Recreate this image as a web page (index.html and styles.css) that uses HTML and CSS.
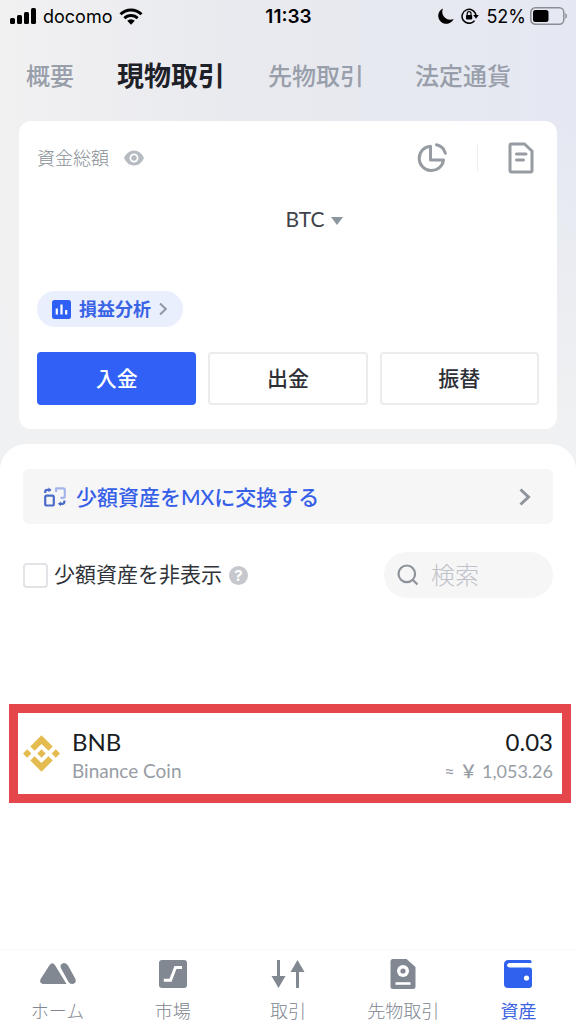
FILE: index.html
```html
<!DOCTYPE html>
<html lang="ja">
<head>
<meta charset="utf-8">
<meta name="viewport" content="width=device-width, initial-scale=1">
<title>現物取引</title>
<link rel="stylesheet" href="styles.css">
</head>
<body>
<div class="screen">
  <header class="status">
    <div class="status-side">
      <svg width="26" height="16" viewBox="0 0 26 16" aria-hidden="true"><rect y="10" width="5" height="6" rx="1.5"/><rect x="7" y="7" width="5" height="9" rx="1.5"/><rect x="14" y="4" width="5" height="12" rx="1.5"/><rect x="21" width="5" height="16" rx="1.5"/></svg>
      <span>docomo</span>
      <svg width="24" height="17" viewBox="0 0 24 17" aria-hidden="true"><g fill="none" stroke="#000" stroke-width="3"><path d="M1.5 6.2a15 15 0 0 1 21 0"/><path d="M5.4 10.2a9.4 9.4 0 0 1 13.2 0"/></g><path d="M8.2 12.8a5.4 5.4 0 0 1 7.6 0L12 16.8z"/></svg>
    </div>
    <time class="clock">11:33</time>
    <div class="status-side status-right">
      <svg width="16" height="16" viewBox="0 0 16 16" aria-hidden="true"><path d="M5 .5A8 8 0 1 0 15.6 11 8 8 0 0 1 5 .5z"/></svg>
      <svg width="18" height="16" viewBox="0 0 18 16" aria-hidden="true"><path d="M13.6 12.6A7 7 0 1 1 15 7.5" fill="none" stroke="#000" stroke-width="1.5"/><path d="M12.2 7h5.6L15 10.8z"/><rect x="5" y="7" width="6.2" height="4.6" rx=".8"/><path d="M6.2 7V5.6a1.9 1.9 0 0 1 3.8 0V7" fill="none" stroke="#000" stroke-width="1.2"/></svg>
      <span class="battery">52% <svg width="37" height="18" viewBox="0 0 37 18" aria-hidden="true"><rect x=".8" y=".8" width="33" height="16.4" rx="4.5" fill="none" stroke="#8e8f94" stroke-width="1.5"/><rect x="3" y="3" width="15.500" height="12" rx="2.5"/><path d="M35.300 6Q37 7 37 9T35.300 12z" fill="#8e8f94"/></svg></span>
    </div>
  </header>

  <nav class="tabs">
    <a href="#overview">概要</a>
    <a href="#spot" class="active" aria-current="page">現物取引</a>
    <a href="#futures">先物取引</a>
    <a href="#fiat">法定通貨</a>
  </nav>

  <section class="card">
    <div class="card-head">
      <span class="muted">資金総額</span>
      <button class="icon-btn" aria-label="残高を隠す"><svg width="20" height="16" viewBox="0 0 20 16"><path d="M0 8Q3.500 .5 10 .5T20 8Q16.500 15.500 10 15.500T0 8z" fill="#b5bbc0"/><circle cx="10" cy="8" r="3.600" fill="none" stroke="#fff" stroke-width="1.800"/></svg></button>
      <div class="card-tools">
        <button class="icon-btn" aria-label="資産配分"><svg width="30" height="30" viewBox="0 0 30 30" fill="none" stroke="#969ca1" stroke-width="3" stroke-linejoin="round" stroke-linecap="round"><path d="M13.500 3.200A12.200 12.200 0 1 0 26.500 17H13.500z"/><path d="M19.500 1.700A12 12 0 0 1 28.300 10.200"/></svg></button>
        <span class="divider"></span>
        <button class="icon-btn" aria-label="履歴"><svg width="26" height="32" viewBox="0 0 26 32" fill="none" stroke="#969ca1" stroke-width="3" stroke-linejoin="round" stroke-linecap="round"><path d="M3.500 2H16.500L24 9V28.500Q24 30 22.500 30H3.500Q2 30 2 28.500V3.500Q2 2 3.500 2z"/><path d="M8.500 12H18M8.500 18H15.500"/></svg></button>
      </div>
    </div>
    <button class="currency">BTC <svg width="12" height="8" viewBox="0 0 12 8" aria-hidden="true"><path d="M0 0h12L6 8z" fill="#8b969f"/></svg></button>
    <a class="pill" href="#pnl">
      <svg width="19" height="19" viewBox="0 0 19 19" aria-hidden="true"><rect width="19" height="19" rx="2.500" fill="#2f60f5"/><path d="M4.800 8.500V14.500M9.500 4.500V14.500M14.200 10V14.500" stroke="#fff" stroke-width="2.200"/></svg>
      <span class="label">損益分析</span>
      <svg width="8" height="14" viewBox="0 0 8 14" fill="none" stroke="#8e99a6" stroke-width="2" aria-hidden="true"><path d="M1 1.500L6.800 7 1 12.500"/></svg>
    </a>
    <div class="actions">
      <button class="action primary">入金</button>
      <button class="action">出金</button>
      <button class="action">振替</button>
    </div>
  </section>

  <main class="sheet">
    <a class="banner" href="#convert">
      <svg width="22" height="20" viewBox="0 0 22 20" fill="none" stroke-width="2.200" aria-hidden="true"><rect x="1.200" y="8.700" width="8.600" height="9.800" rx="1.500" stroke="#4a6cc8"/><path d="M1.200 6V5Q1.200 2.900 3.400 2.900H5" stroke="#4a6cc8"/><path d="M4.500 .5L7.700 2.900 4.500 5.300z" fill="#4a6cc8"/><path d="M12 1.400H19Q20.800 1.400 20.800 3V9.200Q20.800 10.800 19 10.800H16.500M12.100 .5V5" stroke="#a3b5ec"/><path d="M20.400 13.500V14.500Q20.400 16.800 18.200 16.800H16.800" stroke="#4a6cc8"/><path d="M17 14.400L13.800 16.800 17 19.200z" fill="#4a6cc8"/></svg>
      <span class="label">少額資産をMXに交換する</span>
      <svg class="end" width="12" height="18" viewBox="0 0 12 18" fill="none" stroke="#8f939b" stroke-width="3" aria-hidden="true"><path d="M1.500 1.500L9.500 9 1.500 16.500"/></svg>
    </a>

    <div class="filters">
      <label class="check"><input type="checkbox"><span class="label">少額資産を非表示</span></label>
      <button class="help" aria-label="ヘルプ">?</button>
      <label class="search">
        <svg width="22" height="22" viewBox="0 0 22 22" fill="none" stroke="#8d939b" stroke-width="2.200" aria-hidden="true"><circle cx="9.800" cy="9.800" r="8.300"/><path d="M15.500 15.500L20.500 20.500"/></svg>
        <input type="search" placeholder="検索" aria-label="検索">
      </label>
    </div>

    <a class="asset" href="#bnb">
      <svg width="37" height="37" viewBox="0 0 37 37" fill="#e4bb4f" aria-hidden="true"><path d="M7.300 11.500L18.500 .3 29.700 11.500 25.400 15.800 18.500 8.900 11.600 15.800z"/><path d="M7.300 25.500L18.500 36.700 29.700 25.500 25.400 21.200 18.500 28.100 11.600 21.200z"/><path d="M4.200 14.300l4.200 4.200-4.200 4.200L0 18.500zM32.800 14.300l4.200 4.200-4.200 4.200-4.200-4.200zM18.500 14.300l4.200 4.200-4.200 4.200-4.200-4.200z"/></svg>
      <div class="asset-text"><strong>BNB</strong><span class="name">Binance Coin</span></div>
      <div class="asset-text amount"><strong>0.03</strong><span class="value">≈ <span class="yen">￥</span> 1,053.26</span></div>
    </a>
  </main>

  <nav class="tabbar">
    <a href="#home"><svg width="36" height="32" viewBox="0 0 36 32" fill="#818891" aria-hidden="true"><path d="M9.300 7.500Q12.300 3.200 15.200 7.500L26.500 26H3.500Q-1.300 25.200.8 20.800z"/><path d="M21 10.200Q19.500 6.600 22.500 5.400 25.800 4.200 28 7.600L35.300 20.800Q37 25.400 32 26 29.800 26 28.500 24z"/></svg><span>ホーム</span></a>
    <a href="#market"><svg width="28" height="32" viewBox="0 0 28 32" aria-hidden="true"><rect y="2" width="28" height="28" rx="3" fill="#818891"/><path d="M4.800 22.200H11.500L16.500 9.500H23" fill="none" stroke="#fff" stroke-width="3"/></svg><span>市場</span></a>
    <a href="#trade"><svg width="34" height="32" viewBox="0 0 34 32" aria-hidden="true"><path d="M7.500 2V20M26.500 12V30" stroke="#818891" stroke-width="3"/><path d="M.5 18h14L7.500 30zM19.500 14h14L26.500 2z" fill="#818891"/></svg><span>取引</span></a>
    <a href="#futures-trade"><svg width="26" height="32" viewBox="0 0 26 32" aria-hidden="true"><path d="M3 1H16.500L25.500 9V28.500Q25.500 31 23 31H3Q.5 31 .5 28.500V3.500Q.5 1 3 1z" fill="#818891"/><circle cx="13" cy="13" r="6" fill="#fff"/><circle cx="13" cy="13" r="2.600" fill="#818891"/><path d="M5.500 25.500H20.500" stroke="#fff" stroke-width="2.600"/></svg><span>先物取引</span></a>
    <a href="#assets" class="active" aria-current="page"><svg width="28" height="32" viewBox="0 0 28 32" aria-hidden="true"><path d="M27.500 5V3.500Q27.500 2 26 2H4.500Q0 2 0 6.500V26Q0 30 4 30H25Q28 30 28 27V12Q28 9.500 25.500 9.500H5.500Q3 9.200 3 7.300 3 5.200 5.500 5z" fill="#3060ee"/><circle cx="22.500" cy="20" r="2.600" fill="#fff"/></svg><span>資産</span></a>
  </nav>
</div>
</body>
</html>
```
FILE: styles.css
```css
* { box-sizing: border-box; }

body {
  margin: 0;
  font-family: "Noto Sans CJK JP", sans-serif;
  color: #22252b;
  background: #fff;
}

a { color: inherit; text-decoration: none; }
button { font: inherit; color: inherit; border: 0; padding: 0; background: none; cursor: pointer; }
svg { display: block; flex: none; }

.screen {
  display: flex;
  flex-direction: column;
  min-height: 100vh;
  background: linear-gradient(180deg, rgba(240, 241, 242, 0) 120px, #f0f1f2 430px), linear-gradient(90deg, #f1f1f2, #e9eaef 40%, #e5e8f2);
}

.status {
  display: grid;
  grid-template-columns: 1fr auto 1fr;
  align-items: center;
  height: 32px;
  padding: 0 9px 0 10px;
  font-family: Inter, sans-serif;
  font-size: 18px;
  color: #000;
}
.status-side { display: flex; align-items: center; gap: 7px; }
.status-right { justify-content: flex-end; }
.battery { display: flex; align-items: center; gap: 4px; }
.clock { font-size: 19px; font-weight: 600; }

.tabs {
  display: flex;
  align-items: center;
  gap: 43px;
  height: 89px;
  padding: 0 26px 4px;
  font-size: 24px;
  font-weight: 500;
  color: #989eaa;
  white-space: nowrap;
}
.tabs .active { font-size: 27px; font-weight: 700; color: #1e2128; }
.tabs a:last-child { margin-left: 8px; }

.label { padding-bottom: 4px; }

.card {
  display: flex;
  flex-direction: column;
  margin: 0 19px 15px;
  padding: 18px 18px 24px;
  border-radius: 12px;
  background: #fff;
}
.card-head { display: flex; align-items: center; gap: 15px; height: 38px; }
.muted { padding-bottom: 2px; font-size: 18px; font-weight: 300; color: #888e96; }
.card-tools { display: flex; align-items: center; gap: 30px; margin-left: auto; padding-right: 5px; }
.divider { width: 1px; height: 26px; background: #eceef0; }
.currency {
  display: flex;
  align-items: center;
  align-self: center;
  gap: 6px;
  height: 32px;
  margin: 25px 0 57px;
  padding-left: 52px;
  font-family: Lato, sans-serif;
  font-size: 21px;
  color: #3f4349;
}
.currency svg { margin-top: 6px; }
.pill {
  display: flex;
  align-items: center;
  align-self: flex-start;
  gap: 8px;
  height: 36px;
  padding: 0 16px 0 15px;
  border-radius: 18px;
  background: #e9effd;
  font-size: 18px;
  font-weight: 700;
  color: #3a63e6;
}
.pill .label { padding-bottom: 2px; }
.actions { display: grid; grid-template-columns: repeat(3, 1fr); gap: 12px; margin-top: 25px; }
.action {
  height: 53px;
  padding-bottom: 4px;
  border: 2px solid #ebecee;
  border-radius: 4px;
  font-size: 21px;
  font-weight: 500;
  color: #2d3036;
}
.action.primary { border-color: #3060f6; background: #3060f6; color: #fff; }

.sheet {
  flex: 1;
  padding: 25px 0 0;
  border-radius: 26px 26px 0 0;
  background: #fff;
}
.banner {
  display: flex;
  align-items: center;
  gap: 10px;
  height: 55px;
  margin: 0 23px;
  padding: 0 22px 0 21px;
  border-radius: 6px;
  background: #f6f6f7;
  font-family: Lato, "Noto Sans CJK JP", sans-serif;
  font-size: 21px;
  font-weight: 500;
  color: #365fe8;
}
.banner .label { padding-bottom: 2px; }
.end { margin-left: auto; }

.filters { display: flex; align-items: center; margin: 28px 23px 106px; }
.check { display: flex; align-items: center; gap: 6px; font-size: 21px; color: #303339; white-space: nowrap; }
.check input {
  appearance: none;
  width: 25px;
  height: 25px;
  margin: 0;
  border: 2px solid #e2e3e6;
  border-radius: 4px;
  background: #fff;
}
.help {
  width: 19px;
  height: 19px;
  margin-left: 7px;
  border-radius: 50%;
  background: #c6c8ce;
  font: 700 15px/19px Inter, sans-serif;
  color: #fff;
}
.search {
  display: flex;
  align-items: center;
  gap: 12px;
  width: 169px;
  height: 46px;
  margin-left: auto;
  padding: 0 13px;
  border-radius: 23px;
  background: #f6f6f7;
}
.search input {
  min-width: 0;
  flex: 1;
  padding: 0 0 4px;
  border: 0;
  outline: 0;
  background: none;
  font: 300 24px "Noto Sans CJK JP", sans-serif;
}
.search input::placeholder { color: #bfc2c9; }

.asset {
  display: flex;
  align-items: center;
  gap: 12px;
  height: 99px;
  margin: 0 5px 0 9px;
  padding: 0 9px 0 5px;
  border: 9px solid #e4464c;
  font-family: Lato, "Noto Sans CJK JP", sans-serif;
}
.asset-text { display: flex; flex-direction: column; padding-top: 4px; }
.asset-text strong { font-size: 24px; font-weight: 400; line-height: 30px; color: #191c22; }
.name, .value { line-height: 28px; color: #979da5; }
.name { font-size: 19px; }
.value { font-size: 18px; }
.yen { font-weight: 500; }
.amount { margin-left: auto; align-items: flex-end; }

.tabbar {
  display: grid;
  grid-template-columns: repeat(5, 1fr);
  height: 75px;
  padding-top: 8px;
  background: #fff;
  border-top: 1px solid #fafafa;
}
.tabbar a {
  display: flex;
  flex-direction: column;
  align-items: center;
  gap: 7px;
  font-size: 18px;
  font-weight: 300;
  line-height: 26px;
  color: #80868f;
  white-space: nowrap;
}
.tabbar .active { color: #3c64df; font-weight: 400; }
```
